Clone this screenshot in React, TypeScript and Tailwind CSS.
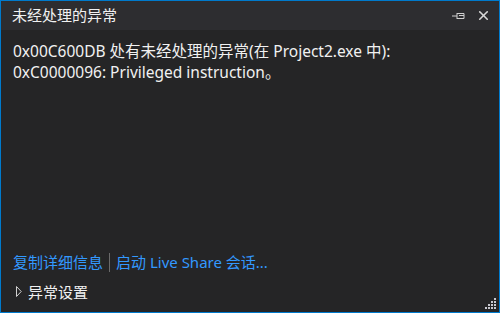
import { X } from "lucide-react";

const font = { fontFamily: '"Noto Sans", "Noto Sans CJK SC", sans-serif' };

function PinIcon() {
  return (
    <svg width="14" height="8" viewBox="0 0 14 8" className="text-[#d0d0d0]">
      <path d="M0 4h5M5 1v6M5 1.5h7v5H5M7 3.5h5" fill="none" stroke="currentColor" strokeWidth="1" />
    </svg>
  );
}

function Grip() {
  const dots = [
    [9, 0],
    [6, 3],
    [9, 3],
    [3, 6],
    [6, 6],
    [9, 6],
    [0, 9],
    [3, 9],
    [6, 9],
    [9, 9],
  ];
  return (
    <svg width="11" height="11" viewBox="0 0 11 11">
      {dots.map(([x, y]) => (
        <rect key={`${x}-${y}`} x={x} y={y} width="2" height="2" fill="#c8c8d0" />
      ))}
    </svg>
  );
}

export default function App() {
  return (
    <div className="relative flex h-[313px] w-[500px] flex-col border border-[#007acc] bg-[#252526]" style={font}>
      <div className="flex h-[29px] shrink-0 items-center justify-between bg-[#2d2d30] pl-[11px] pr-[8px]">
        <span className="text-[15px] text-[#f1f1f1]">未经处理的异常</span>
        <div className="flex items-center gap-[10px]">
          <PinIcon />
          <X className="h-[15px] w-[15px] text-[#d8d8d8]" strokeWidth={2.6} />
        </div>
      </div>
      <div className="flex flex-1 flex-col px-[12px] pb-[9px] pt-[11px]">
        <p className="text-[15.5px] leading-[21px] text-[#f1f1f1]">
          0x00C600DB 处有未经处理的异常(在 Project2.exe 中):
          <br />
          0xC0000096: Privileged instruction。
        </p>
        <div className="mt-auto flex items-center text-[15px] text-[#3399ff]">
          <span>复制详细信息</span>
          <span className="mx-[6px] h-[19px] w-px bg-[#6a6a6a]" />
          <span>启动 Live Share 会话...</span>
        </div>
        <div className="flex items-center gap-[6px] pl-[3px] pt-[7px] text-[15px] text-[#f1f1f1]">
          <svg width="6" height="11" viewBox="0 0 6 11">
            <path d="M0.5 0.5L5.2 5.5L0.5 10.5Z" fill="none" stroke="#d0d0d0" strokeWidth="1" />
          </svg>
          <span>异常设置</span>
        </div>
      </div>
      <div className="absolute bottom-[3px] right-[3px]">
        <Grip />
      </div>
    </div>
  );
}
